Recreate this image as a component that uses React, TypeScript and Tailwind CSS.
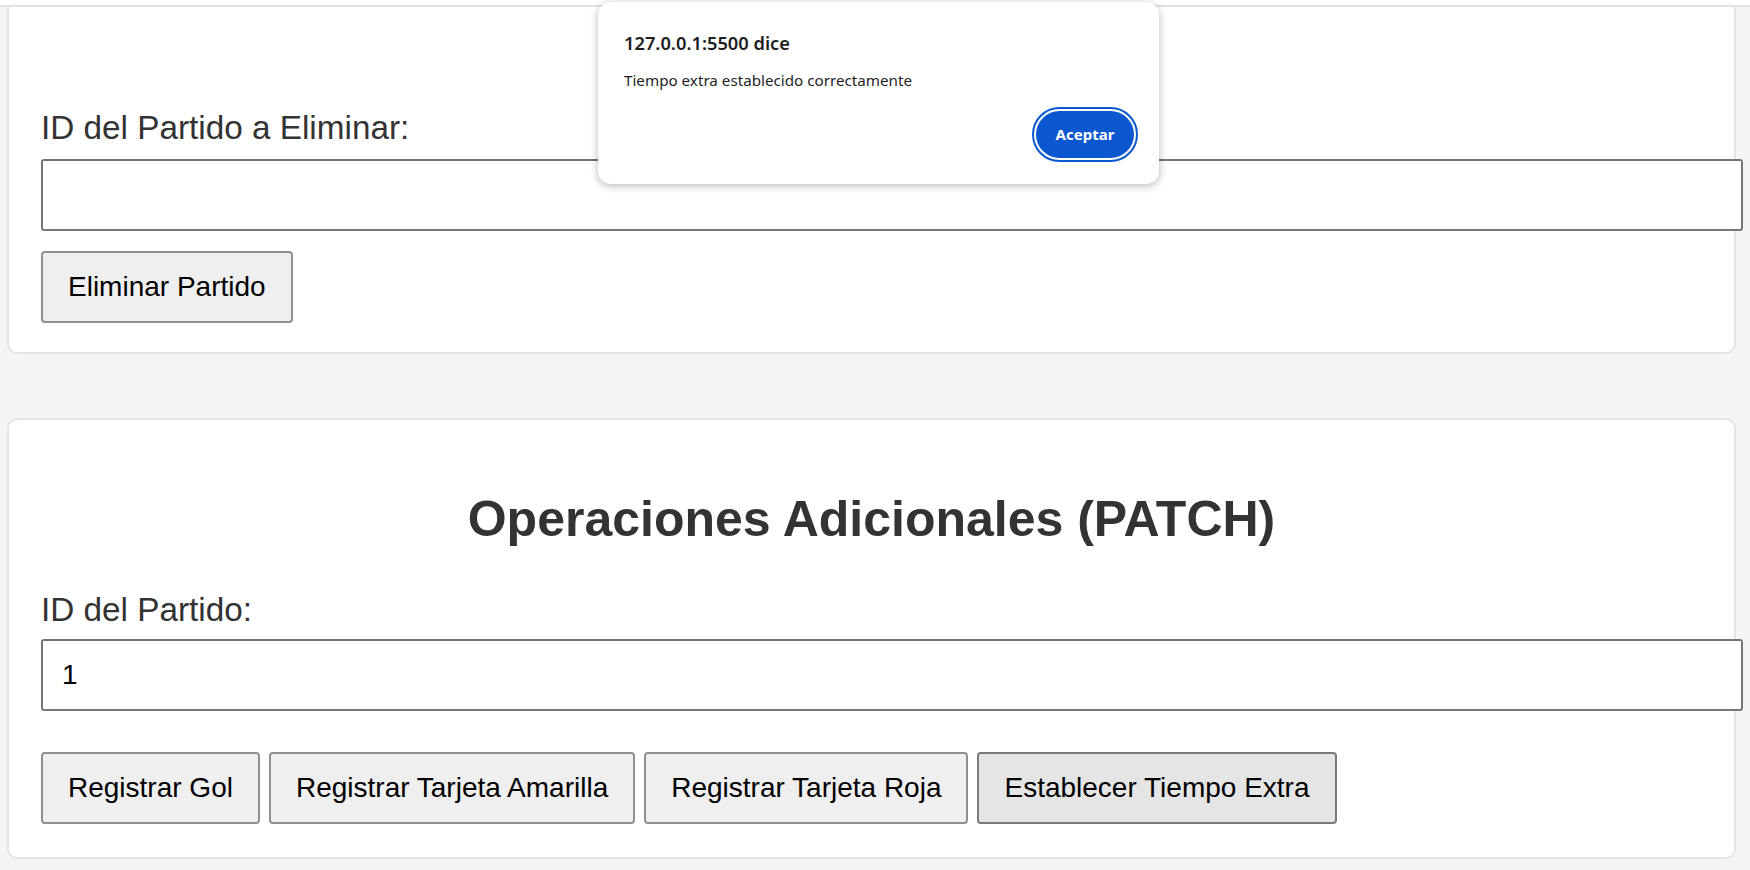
import React from "react";

const btn =
  "h-[72px] px-[25px] bg-[#efefef] border-2 border-[#8f8f8f] rounded-[4px] text-[28px] leading-[32px] text-black whitespace-nowrap";

const inputCls =
  "block w-[1702px] h-[72px] border-2 border-[#767676] rounded-[3px] bg-white px-[19px] text-[28px] text-black outline-none";

export default function App() {
  return (
    <div className="relative w-[1750px] h-[870px] overflow-hidden bg-[#f5f5f5] font-['Liberation_Sans',Arial,sans-serif] text-[#333]">
      <div className="h-[5px] bg-white" />
      <div className="h-[2px] bg-[#e2e2e2]" />
      <div className="pl-[7px] pr-[14px]">
        {/* Card 1 (top cut off) */}
        <div className="bg-white border-2 border-t-0 border-[#e4e4e4] rounded-b-[10px] pl-[32px] pt-[101px] pb-[29px]">
          <label className="block text-[33.3px] leading-[39px]">ID del Partido a Eliminar:</label>
          <input className={inputCls + " mt-[12px]"} defaultValue="" />
          <button className={btn + " mt-[20px] block"}>Eliminar Partido</button>
        </div>

        {/* Card 2 */}
        <div className="mt-[64px] bg-white border-2 border-[#e4e4e4] rounded-[10px] pl-[32px] pt-[70px] pb-[33px]">
          <h2 className="text-center font-bold text-[50px] leading-[58px] pr-[32px]">
            Operaciones Adicionales (PATCH)
          </h2>
          <label className="block mt-[42px] text-[33.3px] leading-[39px]">ID del Partido:</label>
          <input className={inputCls + " mt-[10px]"} defaultValue="1" />
          <div className="mt-[41px] flex gap-[9px]">
            <button className={btn}>Registrar Gol</button>
            <button className={btn}>Registrar Tarjeta Amarilla</button>
            <button className={btn}>Registrar Tarjeta Roja</button>
            <button className="h-[72px] px-[25px] bg-[#e5e5e5] border-2 border-[#7a7a7a] rounded-[4px] text-[28px] leading-[32px] text-black whitespace-nowrap">
              Establecer Tiempo Extra
            </button>
          </div>
        </div>
      </div>

      {/* Alert dialog */}
      <div className="absolute left-[598px] top-[2px] w-[561px] h-[182px] bg-white rounded-[13px] shadow-[0_2px_8px_rgba(0,0,0,0.28)] font-['Noto_Sans',sans-serif] text-[#1f1f1f] pl-[26px] pr-[21px] pt-[29px]">
        <div className="text-[18.3px] leading-[24px] font-semibold">127.0.0.1:5500 dice</div>
        <div className="mt-[15px] text-[15.2px] leading-[20px]">Tiempo extra establecido correctamente</div>
        <div className="mt-[17px] flex justify-end">
          <div className="rounded-full border-2 border-[#0b57d0] p-[2px] bg-white">
            <div className="w-[98px] h-[47px] rounded-full bg-[#0b57d0] flex items-center justify-center text-white text-[15px] font-bold">
              Aceptar
            </div>
          </div>
        </div>
      </div>
    </div>
  );
}
